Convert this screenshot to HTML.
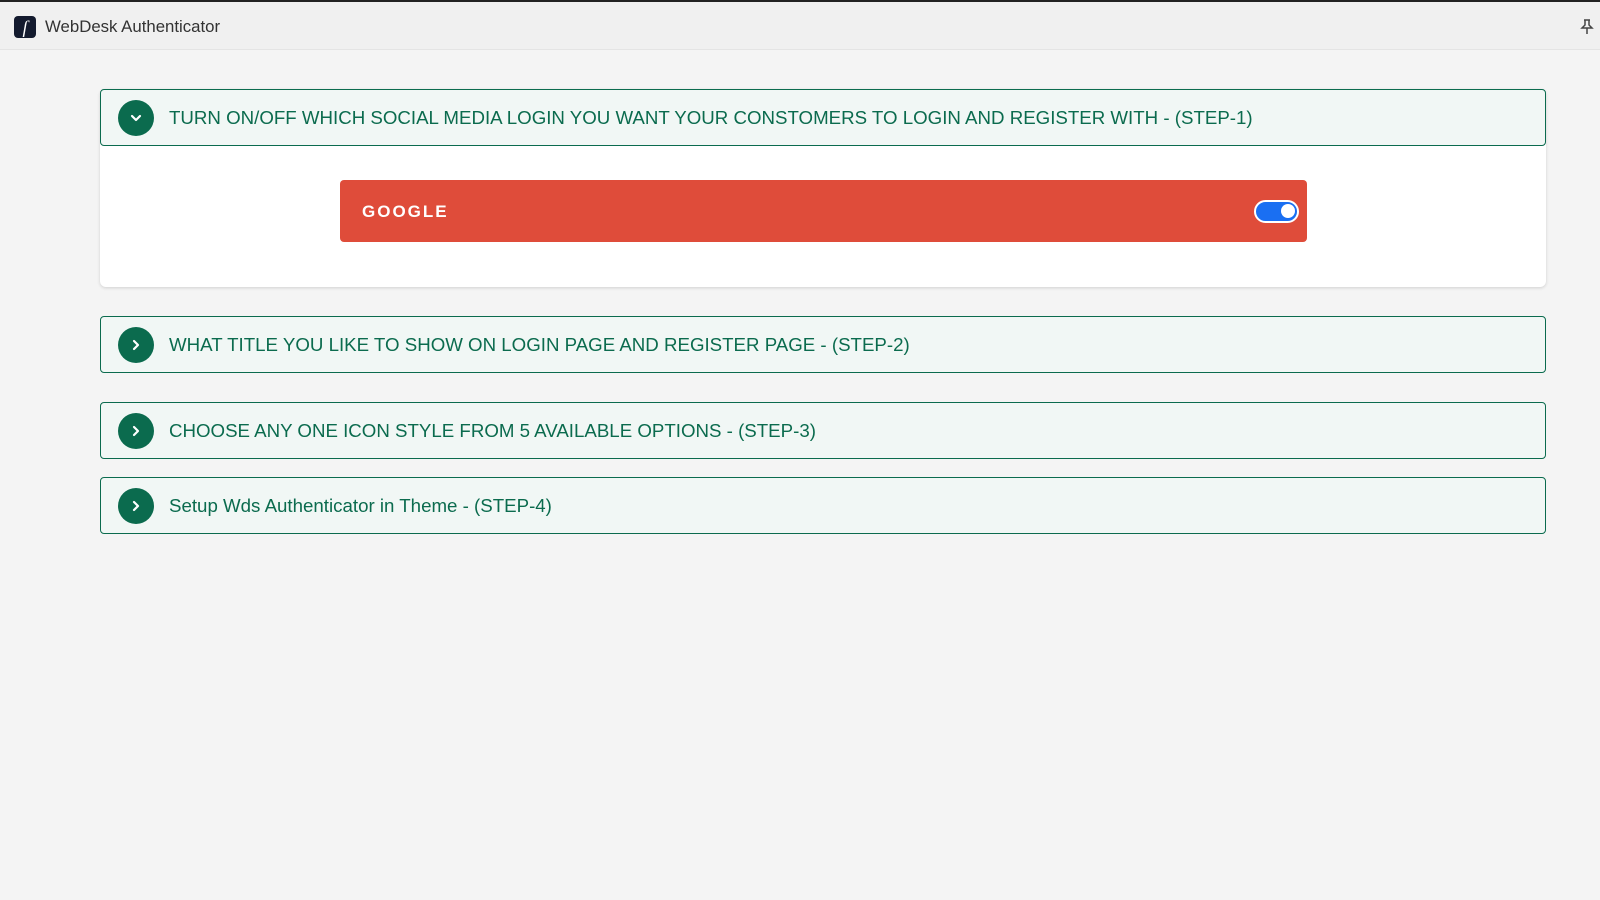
<!DOCTYPE html>
<html><head><meta charset="utf-8"><style>
*{box-sizing:border-box;margin:0;padding:0}
body{width:1600px;height:900px;background:#f4f4f4;font-family:"Liberation Sans",sans-serif;overflow:hidden;position:relative}
.top{position:absolute;left:0;top:0;width:1600px;height:50px;background:#f0f0f0;border-top:2px solid #222;border-bottom:1px solid #e4e4e4}
.logo{position:absolute;left:14px;top:14px;width:22px;height:22px;background:#131a2e;border-radius:4px;color:#fff;font:italic 18px "Liberation Serif",serif;text-align:center;line-height:22px}
.title{position:absolute;left:45px;top:15px;font-size:16.8px;color:#333}
.pin{position:absolute;left:1580px;top:17px}
.card{position:absolute;left:100px;width:1446px;background:#fff;border-radius:6px;box-shadow:0 1px 3px rgba(0,0,0,.15)}
.hd{position:absolute;left:100px;width:1446px;height:57px;background:#f1f7f5;border:1.5px solid #0b6b4e;border-radius:4px}
.ic{position:absolute;left:17px;top:10px;width:36px;height:36px;border-radius:50%;background:#0b6b4e}
.ic svg{position:absolute;left:9px;top:9px}
.t{position:absolute;left:68px;top:17px;font-size:18.7px;color:#0b6b4e;white-space:nowrap}
.g{position:absolute;left:340px;top:180px;width:967px;height:62px;background:#df4c3a;border-radius:4px}
.g span{position:absolute;left:22px;top:22px;color:#fff;font-weight:bold;font-size:17px;letter-spacing:2px}
.tg{position:absolute;left:914px;top:20px;width:45px;height:23px;border-radius:12px;background:#1a6ff2;border:2.5px solid #fff}
.tg i{position:absolute;right:2px;top:2px;width:14px;height:14px;border-radius:50%;background:#fff}
</style></head><body>
<div class="top"><div class="logo">ſ</div><div class="title">WebDesk Authenticator</div>
<svg class="pin" width="14" height="16" viewBox="0 0 14 16" fill="none" stroke="#444" stroke-width="1.5"><path d="M4 1h6M5 1v5l-3 3h10l-3-3V1M7 9v6"/></svg></div>
<div class="card" style="top:89px;height:198px"></div>
<div class="g"><span>GOOGLE</span><div class="tg"><i></i></div></div>
<div class="hd" style="top:89px"><div class="ic"><svg width="18" height="18" viewBox="0 0 18 18"><path d="M5 7l4 4 4-4" stroke="#fff" stroke-width="2.2" fill="none" stroke-linecap="round" stroke-linejoin="round"/></svg></div><div class="t">TURN ON/OFF WHICH SOCIAL MEDIA LOGIN YOU WANT YOUR CONSTOMERS TO LOGIN AND REGISTER WITH - (STEP-1)</div></div>
<div class="hd" style="top:316px"><div class="ic"><svg width="18" height="18" viewBox="0 0 18 18"><path d="M7 5l4 4-4 4" stroke="#fff" stroke-width="2.2" fill="none" stroke-linecap="round" stroke-linejoin="round"/></svg></div><div class="t">WHAT TITLE YOU LIKE TO SHOW ON LOGIN PAGE AND REGISTER PAGE - (STEP-2)</div></div>
<div class="hd" style="top:402px"><div class="ic"><svg width="18" height="18" viewBox="0 0 18 18"><path d="M7 5l4 4-4 4" stroke="#fff" stroke-width="2.2" fill="none" stroke-linecap="round" stroke-linejoin="round"/></svg></div><div class="t">CHOOSE ANY ONE ICON STYLE FROM 5 AVAILABLE OPTIONS - (STEP-3)</div></div>
<div class="hd" style="top:477px"><div class="ic"><svg width="18" height="18" viewBox="0 0 18 18"><path d="M7 5l4 4-4 4" stroke="#fff" stroke-width="2.2" fill="none" stroke-linecap="round" stroke-linejoin="round"/></svg></div><div class="t">Setup Wds Authenticator in Theme - (STEP-4)</div></div>
</body></html>
